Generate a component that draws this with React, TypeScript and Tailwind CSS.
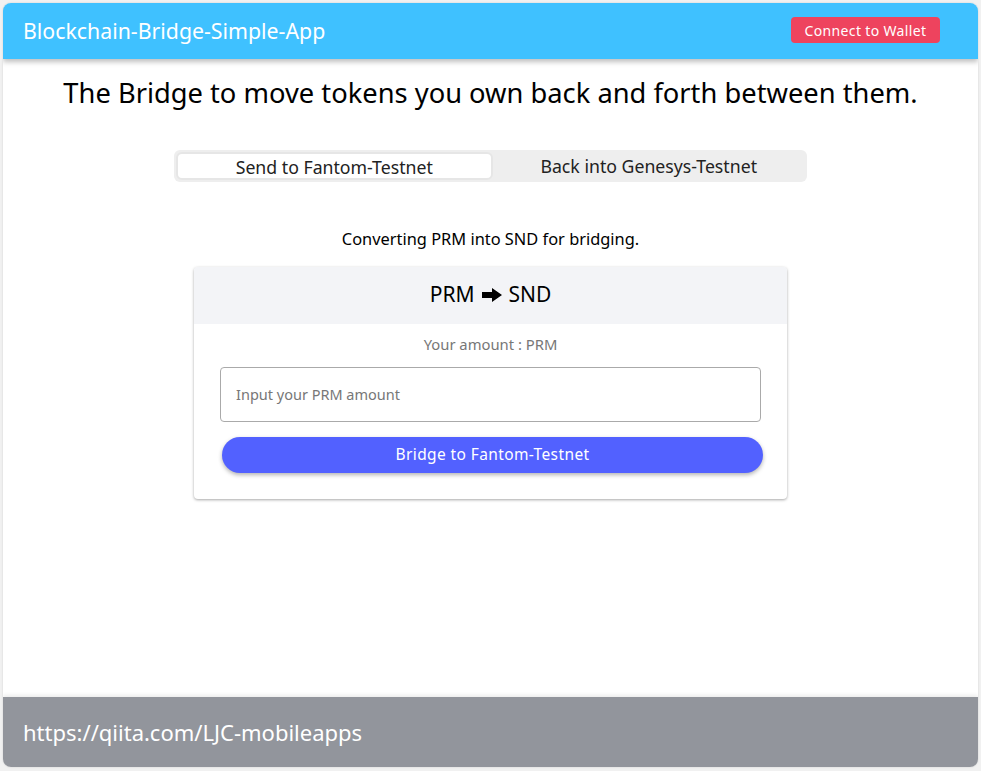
import { useState } from "react";

const font = { fontFamily: '"Noto Sans", "Open Sans", sans-serif' };

function HeavyArrow() {
  return (
    <svg width="20" height="14" viewBox="0 0 20 14" className="mx-[7px] inline-block">
      <path d="M0 4h10V0l10 7-10 7v-4H0z" fill="#000" />
    </svg>
  );
}

export default function App() {
  const [tab, setTab] = useState(0);
  const from = tab === 0 ? "PRM" : "SND";
  const to = tab === 0 ? "SND" : "PRM";
  const net = tab === 0 ? "Fantom-Testnet" : "Genesys-Testnet";

  return (
    <div className="min-h-screen bg-[#f1f1f1] p-[3px]" style={font}>
      <div className="flex h-[764px] flex-col overflow-hidden rounded-lg bg-white shadow-[0_0_2px_rgba(0,0,0,0.15)]">
        {/* Header */}
        <header className="relative z-10 flex h-14 shrink-0 items-center justify-between bg-[#3fc1ff] pl-5 pr-[38px] shadow-[0_3px_5px_rgba(0,0,0,0.25)]">
          <h1 className="text-[21.3px] text-white">Blockchain-Bridge-Simple-App</h1>
          <button className="mb-[2px] h-[26px] w-[149px] rounded bg-[#ee435e] text-[14px] tracking-wide text-white">
            Connect to Wallet
          </button>
        </header>

        <main className="flex flex-1 flex-col items-center">
          <h2 className="mt-[14px] text-[27.3px] text-black">
            The Bridge to move tokens you own back and forth between them.
          </h2>

          {/* Tabs */}
          <div className="mt-[36px] flex h-8 w-[633px] rounded-md bg-[#eeeeee] p-0.5">
            <button
              onClick={() => setTab(0)}
              className={`flex-1 rounded-md text-[17.7px] text-[#222] ${
                tab === 0 ? "border-2 border-[#e6e6e6] bg-white" : ""
              }`}
            >
              Send to Fantom-Testnet
            </button>
            <button
              onClick={() => setTab(1)}
              className={`flex-1 rounded-md text-[17.7px] text-[#222] ${
                tab === 1 ? "border-2 border-[#e6e6e6] bg-white" : ""
              }`}
            >
              Back into Genesys-Testnet
            </button>
          </div>

          <p className="mt-[45px] text-[16.4px] text-black">
            Converting {from} into {to} for bridging.
          </p>

          {/* Card */}
          <div className="mt-[15px] w-[593px] overflow-hidden rounded bg-white shadow-[0_1px_3px_rgba(0,0,0,0.35)]">
            <div className="flex h-[57px] items-center justify-center bg-[#f3f4f7] text-[21px] text-black">
              {from}
              <HeavyArrow />
              {to}
            </div>
            <div className="flex flex-col items-center px-[26px] pb-[26px] pt-[9px]">
              <p className="text-[14.8px] text-[#777]">Your amount : {from}</p>
              <input
                placeholder={`Input your ${from} amount`}
                className="mt-[12px] h-[55px] w-full rounded border border-[#aaa] px-[15px] text-[14.5px] outline-none placeholder:text-[#777]"
              />
              <button className="mt-[15px] ml-[4px] h-9 w-[541px] rounded-full bg-[#5261ff] text-[15.5px] tracking-wide text-white shadow-[0_2px_4px_rgba(0,0,0,0.3)]">
                Bridge to {net}
              </button>
            </div>
          </div>
        </main>

        {/* Footer */}
        <footer className="flex h-[70px] shrink-0 items-center bg-[#92959c] px-5 shadow-[0_-2px_4px_rgba(0,0,0,0.08)]">
          <span className="text-[22px] text-white">https://qiita.com/LJC-mobileapps</span>
        </footer>
      </div>
    </div>
  );
}
